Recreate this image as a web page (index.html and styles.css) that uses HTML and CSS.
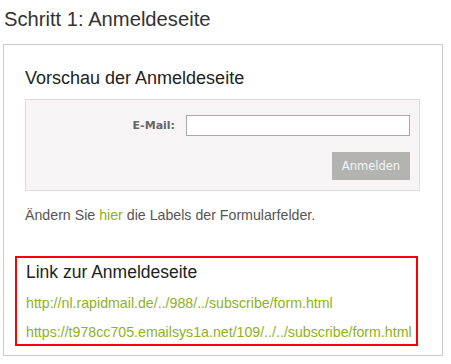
FILE: index.html
```html
<!DOCTYPE html>
<html lang="de">
<head>
<meta charset="utf-8">
<title>Schritt 1: Anmeldeseite</title>
<link rel="stylesheet" href="styles.css">
</head>
<body>
  <h1 class="step-title">Schritt 1: Anmeldeseite</h1>
  <div class="panel">
    <h2 class="section-title">Vorschau der Anmeldeseite</h2>
    <div class="preview">
      <div class="field-row">
        <label class="field-label" for="email">E-Mail:</label>
        <input class="field-input" id="email" type="text">
      </div>
      <div class="button-row">
        <button class="submit-btn" type="button">Anmelden</button>
      </div>
    </div>
    <p class="hint">Ändern Sie <a class="link" href="#">hier</a> die Labels der Formularfelder.</p>
    <div class="link-box">
      <h2 class="section-title link-title">Link zur Anmeldeseite</h2>
      <p class="url-line"><a class="link" href="#">http://nl.rapidmail.de/../988/../subscribe/form.html</a></p>
      <p class="url-line"><a class="link" href="#">https://t978cc705.emailsys1a.net/109/../../subscribe/form.html</a></p>
    </div>
  </div>
</body>
</html>
```

FILE: styles.css
```css
html, body {
  margin: 0;
  padding: 0;
  background: #ffffff;
}

body {
  font-family: "Liberation Sans", Arial, sans-serif;
  color: #555555;
}

.step-title {
  margin: 7px 0 13px 4px;
  font-size: 20.2px;
  line-height: 24px;
  font-weight: normal;
  color: #333333;
}

.panel {
  margin-left: 3px;
  width: 395px;
  border: 1px solid #cccccc;
  padding: 22px 22px 9px 21px;
}

.section-title {
  margin: 0 0 10px 0;
  font-size: 18px;
  line-height: 22px;
  font-weight: normal;
  color: #222222;
}

.preview {
  background: #f6f4f4;
  border: 1px solid #dddddd;
  padding: 15px 9px 10px 9px;
}

.field-row {
  display: flex;
  justify-content: flex-end;
  align-items: center;
  gap: 11px;
}

.field-label {
  font-family: "DejaVu Sans", Verdana, sans-serif;
  font-size: 11px;
  font-weight: bold;
  color: #666666;
}

.field-input {
  box-sizing: border-box;
  width: 224px;
  height: 21px;
  margin: 0;
  border: 1px solid #a9a9a9;
  background: #ffffff;
  padding: 0 4px;
}

.button-row {
  display: flex;
  justify-content: flex-end;
  margin-top: 16px;
}

.submit-btn {
  width: 78px;
  height: 28px;
  margin: 0;
  border: none;
  background: #b3b4b1;
  color: #f4f4f4;
  font-family: "DejaVu Sans", Verdana, sans-serif;
  font-size: 11.5px;
  padding: 0;
}

.hint {
  margin: 15px 0 0 0;
  font-size: 14.2px;
  line-height: 18px;
  color: #555555;
}

.link {
  color: #8db31b;
  text-decoration: none;
}

.link-box {
  margin: 32px 2px 0 -10px;
  border: 2px solid #ff0000;
  padding: 3px 9px 3px 9px;
}

.link-title {
  font-size: 17.5px;
  margin-bottom: 11px;
}

.url-line {
  margin: 0 0 11px 0;
  font-size: 14.2px;
  line-height: 18px;
}

.url-line:last-child {
  margin-bottom: 0;
}
```
